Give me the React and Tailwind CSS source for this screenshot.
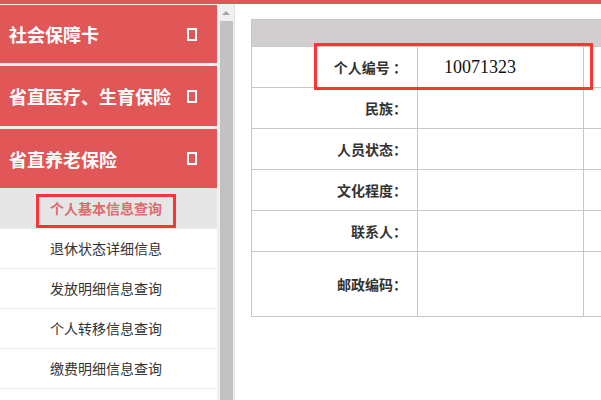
import React from "react";

const menus = [
  { title: "社会保障卡", h: "h-[58px]" },
  { title: "省直医疗、生育保险", h: "h-[60px]" },
  { title: "省直养老保险", h: "h-[59px]" },
];

const subs = [
  "个人基本信息查询",
  "退休状态详细信息",
  "发放明细信息查询",
  "个人转移信息查询",
  "缴费明细信息查询",
];

const rows = [
  { label: "个人编号 ：", value: "10071323", h: "h-[41px]" },
  { label: "民族：", h: "h-[41px]" },
  { label: "人员状态：", h: "h-[41px]" },
  { label: "文化程度：", h: "h-[41px]" },
  { label: "联系人：", h: "h-[41px]" },
  { label: "邮政编码：", h: "h-[65px]" },
];

const App = () => {
  return (
    <div
      className="w-[601px] h-[400px] overflow-hidden bg-white flex flex-col"
      style={{ fontFamily: '"Noto Sans CJK SC", "Noto Sans", sans-serif' }}
    >
      <div className="h-[4px] bg-[#e15656] shrink-0" />
      <div className="flex flex-1 min-h-0">
        {/* sidebar */}
        <div className="w-[217px] shrink-0 flex flex-col bg-white">
          <div className="flex flex-col gap-[3px] bg-[#eeeeee] pt-[1px]">
            {menus.map((m) => (
              <div
                key={m.title}
                className={`${m.h} bg-[#e15656] flex items-center justify-between pl-[9px] pr-[20px]`}
              >
                <span className="text-white text-[18px] font-bold leading-none">
                  {m.title}
                </span>
                <span className="w-[10px] h-[13px] border-2 border-white" />
              </div>
            ))}
          </div>
          {subs.map((s, i) => (
            <div
              key={s}
              className={`relative ${i === 0 ? "h-[41px] bg-[#e6e6e6]" : "h-[40px] bg-white"} border-b border-[#e8e8e8] flex items-center justify-center pr-[5px] text-[14px]`}
            >
              <span
                className={
                  i === 0 ? "text-[#e06a6a] font-semibold" : "text-[#333333]"
                }
              >
                {s}
              </span>
              {i === 0 && (
                <div className="absolute left-[36px] top-[6px] w-[140px] h-[34px] border-[3px] border-[#ff3333]" />
              )}
            </div>
          ))}
        </div>

        {/* scrollbar */}
        <div className="w-[17px] shrink-0 bg-[#f0f0f0] flex flex-col items-center">
          <div className="h-[17px] flex items-center justify-center">
            <div className="w-0 h-0 border-l-[4px] border-r-[4px] border-b-[4px] border-l-transparent border-r-transparent border-b-[#a3a3a3]" />
          </div>
          <div className="w-[13px] flex-1 bg-[#c1c1c1] ml-[2px]" />
        </div>
        <div className="w-[1px] shrink-0 bg-[#dde2e6]" />

        {/* content */}
        <div className="flex-1 pl-[16px] pt-[15px] overflow-hidden">
          <div className="relative w-[400px] border-l border-t border-[#c8c8c8]">
            <div className="h-[27px] bg-[#d0cece] border-b border-[#c8c8c8]" />
            {rows.map((r) => (
              <div key={r.label} className={`${r.h} flex border-b border-[#c8c8c8]`}>
                <div className="w-[166px] border-r border-[#c8c8c8] flex items-center justify-end pr-[10px] text-[14px] font-bold text-[#333333]">
                  {r.label}
                </div>
                <div className="w-[166px] border-r border-[#c8c8c8] flex items-center pl-[26px]">
                  {r.value && (
                    <span
                      className="text-[18px] text-[#111111]"
                      style={{ fontFamily: '"Liberation Serif", serif' }}
                    >
                      {r.value}
                    </span>
                  )}
                </div>
                <div className="flex-1" />
              </div>
            ))}
            <div className="absolute left-[62px] top-[23px] w-[279px] h-[47px] border-[3px] border-[#ff3333]" />
          </div>
        </div>
      </div>
    </div>
  );
};

export default App;
